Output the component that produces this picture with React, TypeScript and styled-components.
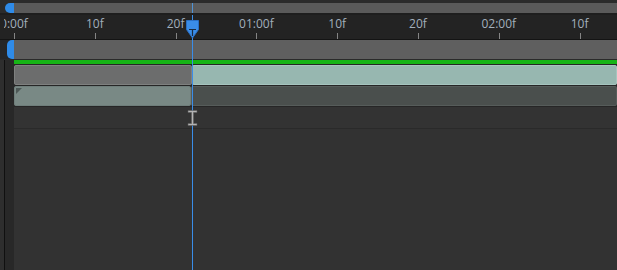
import React from 'react';
import styled, { createGlobalStyle } from 'styled-components';

const GlobalStyle = createGlobalStyle`
    html, body {
        margin: 0;
        padding: 0;
        background: #2b2b2b;
    }
    * {
        box-sizing: border-box;
    }
`;

const FPS = 30;
const ORIGIN = 14;
const PX_PER_FRAME = 8.08;
const PLAYHEAD_X = 192;

const tickFrames = [0, 10, 20, 30, 40, 50, 60, 70];

const pad = (n: number) => (n < 10 ? `0${n}` : `${n}`);
const frameLabel = (f: number) => {
    if (f === 0) return '0:00f';
    if (f % FPS === 0) return `${pad(f / FPS)}:00f`;
    return `${f % FPS}f`;
};

const StyledFrame = styled('div')`
    position: relative;
    width: 617px;
    height: 270px;
    overflow: hidden;
    display: flex;
    flex-direction: column;
    background: #2b2b2b;
    font-family: "Open Sans", "Noto Sans", sans-serif;
`;

// navigator strip at the very top
const StyledNavRow = styled('div')`
    height: 15px;
    display: flex;
    padding-top: 3px;
    border-bottom: 2px solid #1e1e1e;
`;

const StyledNavLeft = styled('div')`
    width: 14px;
    padding-left: 5px;
    display: flex;
`;

const StyledHandle = styled('div')<{ $width: number }>`
    width: ${({ $width }) => $width}px;
    height: 100%;
    background: #2f8be8;
    border-radius: 5px 0 0 5px;
`;

const StyledNavTrack = styled('div')`
    position: relative;
    flex: 1;
    background: #5a5a5a;
`;

const StyledNavMarker = styled('div')`
    position: absolute;
    top: 0;
    bottom: 0;
    width: 1px;
    background: #4f93d6;
`;

// time ruler
const StyledRuler = styled('div')`
    position: relative;
    height: 25px;
    background: #232323;
    border-bottom: 1px solid #141414;
`;

const StyledRulerClip = styled('div')`
    position: absolute;
    left: 4px;
    right: 0;
    top: 0;
    bottom: 0;
    overflow: hidden;
`;

const StyledTick = styled('div')`
    position: absolute;
    top: 0;
    height: 24px;
    width: 1px;
`;

const StyledTickLabel = styled('span')`
    position: absolute;
    top: 1px;
    left: 0;
    transform: translateX(-50%);
    font-size: 12px;
    line-height: 16px;
    color: #a2afbc;
    white-space: nowrap;
`;

const StyledTickMark = styled('div')`
    position: absolute;
    left: 0;
    bottom: 0;
    width: 1px;
    height: 6px;
    background: #858585;
`;

// work area bar
const StyledWorkRow = styled('div')`
    height: 20px;
    display: flex;
    border-bottom: 1px solid #2a2a2a;
`;

const StyledWorkLeft = styled('div')`
    width: 14px;
    padding-left: 7px;
    display: flex;
    background: #262626;
`;

const StyledWorkTrack = styled('div')`
    flex: 1;
    background: #5f5f5f;
`;

// layers area
const StyledBody = styled('div')`
    flex: 1;
    display: flex;
`;

const StyledGutter = styled('div')`
    width: 14px;
    background: linear-gradient(to right, #2e2e2e 0 4px, #101010 4px 5px, #282828 5px 14px);
`;

const StyledTracks = styled('div')`
    flex: 1;
    display: flex;
    flex-direction: column;
    background: #323232;
`;

const StyledGreenRow = styled('div')`
    height: 5px;
    background: #16b416;
    border-bottom: 1px solid #262626;
`;

const StyledLayerRow = styled('div')`
    height: 21px;
    display: flex;
    border-bottom: 1px solid #262626;
`;

const StyledSegment = styled('div')<{ $fill: string; $edge: string; $width?: number; $corner?: boolean }>`
    position: relative;
    ${({ $width }) => ($width ? `width: ${$width}px;` : 'flex: 1;')}
    background: ${({ $fill }) => $fill};
    border: 1px solid ${({ $edge }) => $edge};
    border-radius: 2px;
    &::before {
        content: '';
        display: ${({ $corner }) => ($corner ? 'block' : 'none')};
        position: absolute;
        left: 1px;
        top: 1px;
        border-top: 6px solid #4d5856;
        border-right: 6px solid transparent;
    }
`;

const StyledEmptyRow = styled('div')`
    height: 22px;
    background: #333333;
    border-bottom: 1px solid #2a2a2a;
`;

// playhead overlay
const StyledPlayheadLine = styled('div')`
    position: absolute;
    top: 15px;
    bottom: 0;
    width: 1px;
    background: #3a8de8;
`;

const StyledPlayheadHead = styled('svg')`
    position: absolute;
    top: 20px;
    width: 13px;
    height: 19px;
`;

const StyledCursor = styled('svg')`
    position: absolute;
    left: 187px;
    top: 110px;
    width: 11px;
    height: 16px;
`;

export default function App() {
    return (
        <>
            <GlobalStyle />
            <StyledFrame>
                <StyledNavRow>
                    <StyledNavLeft>
                        <StyledHandle $width={9} />
                    </StyledNavLeft>
                    <StyledNavTrack>
                        <StyledNavMarker style={{ left: PLAYHEAD_X - ORIGIN }} />
                    </StyledNavTrack>
                </StyledNavRow>

                <StyledRuler>
                    <StyledRulerClip>
                        {tickFrames.map((f) => (
                            <StyledTick key={f} style={{ left: ORIGIN - 4 + f * PX_PER_FRAME }}>
                                <StyledTickLabel>{frameLabel(f)}</StyledTickLabel>
                                <StyledTickMark />
                            </StyledTick>
                        ))}
                    </StyledRulerClip>
                </StyledRuler>

                <StyledWorkRow>
                    <StyledWorkLeft>
                        <StyledHandle $width={7} />
                    </StyledWorkLeft>
                    <StyledWorkTrack />
                </StyledWorkRow>

                <StyledBody>
                    <StyledGutter />
                    <StyledTracks>
                        <StyledGreenRow />
                        <StyledLayerRow>
                            <StyledSegment $width={178} $fill="#6c6d6d" $edge="#7e807f" />
                            <StyledSegment $fill="#97b7b0" $edge="#a6c4be" />
                        </StyledLayerRow>
                        <StyledLayerRow>
                            <StyledSegment $width={177} $fill="#798985" $edge="#6f7e7b" $corner />
                            <StyledSegment $fill="#4a4f4d" $edge="#565c5a" />
                        </StyledLayerRow>
                        <StyledEmptyRow />
                    </StyledTracks>
                </StyledBody>

                <StyledPlayheadLine style={{ left: PLAYHEAD_X }} />
                <StyledPlayheadHead style={{ left: PLAYHEAD_X - 6 }} viewBox="0 0 13 19">
                    <path d="M0.5 0.5 H12.5 V9.5 L6.5 18 L0.5 9.5 Z" fill="#3a8de8" stroke="#2a6fc4" />
                    <path d="M3 9.5 H10 M6.5 9.5 V16" stroke="#1a2b40" strokeWidth="1.2" />
                </StyledPlayheadHead>
                <StyledCursor viewBox="0 0 11 16">
                    <path d="M1 0.5 H10 V2.5 H6.5 V13.5 H10 V15.5 H1 V13.5 H4.5 V2.5 H1 Z" fill="#b4b4b4" stroke="#5a5a5a" strokeWidth="0.6" />
                </StyledCursor>
            </StyledFrame>
        </>
    );
}
